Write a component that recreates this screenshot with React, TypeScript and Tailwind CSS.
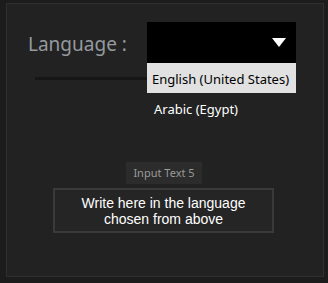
import React from "react";

export default function App() {
  return (
    <div className="w-[328px] h-[283px] bg-[#1c1c1c] pt-[3px] pl-[6px] overflow-hidden">
      <div className="relative w-[318px] h-[274px] border border-[#2f2f2f] bg-[#222222] flex flex-col">
        <div className="flex items-start pt-[18px]">
          <div className="w-[140px] flex flex-col">
            <div className="pl-[21px] pt-[10px] text-[19px] leading-[24px] text-[#959a9f] font-['Noto_Sans',sans-serif]">
              Language :
            </div>
            <div className="ml-[28px] mt-[21px] w-[112px] h-[3px] bg-[#161616]" />
          </div>
          <div className="relative w-[149px] h-[41px] bg-black">
            <svg className="absolute left-[125px] top-[16px]" width="14" height="10" viewBox="0 0 14 10">
              <polygon points="0,0 14,0 7,9" fill="#ffffff" />
            </svg>
            <div className="absolute left-0 top-[41px] w-[149px] flex flex-col font-['Noto_Sans',sans-serif] text-[13px]">
              <div className="h-[30px] bg-[#e1e1e1] text-black pl-[5px] pt-[3px] flex items-center">English (United States)</div>
              <div className="h-[30px] text-white pl-[7px] pt-[4px] flex items-center">Arabic (Egypt)</div>
            </div>
          </div>
        </div>
        <div className="mt-[82px] flex flex-col items-start">
          <div className="ml-[119px] w-[76px] h-[22px] bg-[#2c2c2c] text-[#9a9a9a] text-[11px] font-['Noto_Sans',sans-serif] flex items-center justify-center">
            Input Text 5
          </div>
          <div className="mt-[4px] ml-[46px] w-[221px] h-[45px] border-2 border-[#3a3a3a] bg-[#252525] text-white text-[14px] leading-[16px] font-['Liberation_Sans',Arial,sans-serif] flex items-center justify-center text-center">
            Write here in the language<br />chosen from above
          </div>
        </div>
      </div>
    </div>
  );
}
